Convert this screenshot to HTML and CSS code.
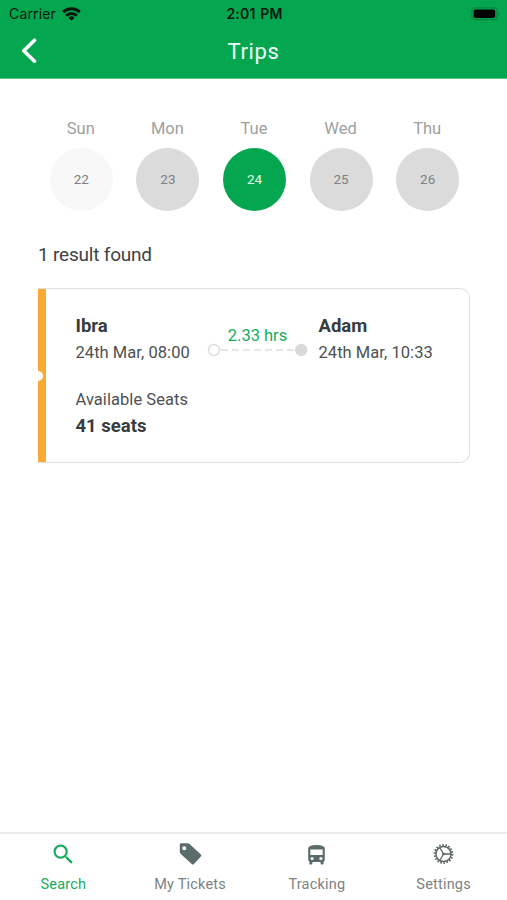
FILE: index.html
```
<!DOCTYPE html>
<html lang="en">
<head>
<meta charset="utf-8">
<title>Trips</title>
<link rel="stylesheet" href="styles.css">
</head>
<body>
<div class="app">
  <header class="header">
    <div class="status">
      <div class="status-left"><span class="carrier">Carrier</span>
        <svg class="wifi" width="19" height="14" viewBox="0 0 19 14" fill="none" stroke="#06170c" stroke-width="2.900"><path d="M1.200 5.100a12 12 0 0 1 16.600 0M4.100 8.700a7.800 7.800 0 0 1 10.800 0"/><path d="M9.500 13.700 6.400 10.800a4.500 4.500 0 0 1 6.200 0z" fill="#06170c" stroke="none"/></svg>
      </div>
      <span class="clock">2:01 PM</span>
      <svg class="battery" width="30" height="14" viewBox="0 0 30 14"><rect x=".8" y=".8" width="25.200" height="11.800" rx="3.200" fill="none" stroke="#07833f" stroke-width="1.200"/><rect x="2.600" y="2.400" width="21.600" height="8.600" rx="1.800" fill="#000"/><path d="M27.300 4.700q3 2 0 4z" fill="#07833f"/></svg>
    </div>
    <div class="nav">
      <svg class="back" width="16" height="26" viewBox="0 0 16 26" fill="none" stroke="#fff" stroke-width="3.600" stroke-linecap="round" stroke-linejoin="round"><path d="M13.500 2.200 2.800 12.700l10.700 10.500"/></svg>
      <h1 class="title">Trips</h1>
      <span></span>
    </div>
  </header>
  <main class="main">
    <div class="days">
      <div class="day"><span class="name">Sun</span><span class="date past">22</span></div>
      <div class="day"><span class="name">Mon</span><span class="date">23</span></div>
      <div class="day"><span class="name">Tue</span><span class="date active">24</span></div>
      <div class="day"><span class="name">Wed</span><span class="date">25</span></div>
      <div class="day"><span class="name">Thu</span><span class="date">26</span></div>
    </div>
    <p class="count">1 result found</p>
    <article class="card">
      <div class="stripe"><span class="notch"></span></div>
      <div class="details">
        <div class="route">
          <div class="stop"><strong class="strong">Ibra</strong><span class="text">24th Mar, 08:00</span></div>
          <div class="leg">
            <span class="duration">2.33 hrs</span>
            <svg width="101" height="14" viewBox="0 0 101 14"><path d="M14 7h74" stroke="#dedede" stroke-width="1.500" stroke-dasharray="7 4"/><circle cx="7" cy="7" r="5.500" fill="#fff" stroke="#dedede" stroke-width="1.500"/><circle cx="94.200" cy="7" r="6.200" fill="#dadada"/></svg>
          </div>
          <div class="stop"><strong class="strong">Adam</strong><span class="text">24th Mar, 10:33</span></div>
        </div>
        <div class="seats"><span class="text">Available Seats</span><strong class="strong">41 seats</strong></div>
      </div>
    </article>
  </main>
  <nav class="tabs">
    <a class="tab selected"><svg width="25" height="25" viewBox="0.700 0.700 22.800 22.800" fill="currentColor"><path d="M15.500 14h-.79l-.28-.27A6.470 6.470 0 0 0 16 9.500 6.500 6.500 0 1 0 9.500 16c1.610 0 3.090-.59 4.230-1.570l.27.28v.79l5 4.990L20.490 19l-4.990-5zm-6 0C7.010 14 5 11.990 5 9.500S7.010 5 9.500 5 14 7.010 14 9.500 11.990 14 9.500 14z"/></svg><span class="label">Search</span></a>
    <a class="tab"><svg width="25" height="25" viewBox="0 0 25 25"><path fill="#5c6c6b" fill-rule="evenodd" d="M3 1.300H9.800q1 0 1.800.8l11.300 10.300q1.100 1.100 0 2.200l-6.900 7.300q-1.100 1-2.200 0L2.800 12.100q-1-.9-1-2V2.500q0-1.200 1.200-1.200zM6.300 4.300a2 2 0 1 0 0 4 2 2 0 0 0 0-4z"/></svg><span class="label">My Tickets</span></a>
    <a class="tab"><svg width="25" height="25" viewBox="0 0 25 25"><path fill="#5c6c6b" fill-rule="evenodd" d="M4.200 6.500q0-3.600 8.300-3.600t8.300 3.600v11q0 1.200-1.200 2.200v1.800q0 1-1 1h-1q-1 0-1-1v-1.400H8.400v1.400q0 1-1 1h-1q-1 0-1-1v-1.800q-1.200-1-1.200-2.200zM6.300 7.600v5.300h12.400V7.600zM8.100 14.900a1.600 1.600 0 1 0 0 3.200 1.600 1.600 0 0 0 0-3.200zm8.800 0a1.600 1.600 0 1 0 0 3.200 1.600 1.600 0 0 0 0-3.200z"/></svg><span class="label">Tracking</span></a>
    <a class="tab"><svg width="25" height="25" viewBox="0 0.500 25 25" fill="none" stroke="#5c6766"><circle cx="12.500" cy="12.500" r="7.600" stroke-width="1.500"/><circle cx="12.500" cy="12.500" r="9" stroke-width="1.800" stroke-dasharray="1.600 1.542"/><path d="M12.500 12.500H20M12.500 12.500 8.800 6M12.500 12.500 8.800 19" stroke-width="1.300"/><circle cx="12.500" cy="12.500" r="1.300" fill="#5c6766" stroke="none"/></svg><span class="label">Settings</span></a>
  </nav>
</div>
</body>
</html>
```
FILE: styles.css
```
* { box-sizing: border-box; }
body { margin: 0; background: #fff; font-family: Roboto, sans-serif; color: #3d4245; }
svg { display: block; flex: none; }
.app { display: flex; flex-direction: column; width: 507px; height: 900px; }
.header { height: 79px; background: #04a750; border-bottom: 1px solid #5cc58d; }
.status { display: grid; grid-template-columns: 1fr auto 1fr; align-items: center; height: 27px; padding: 0 6px 0 9px; font-family: Inter, sans-serif; color: #06170c; }
.status-left { display: flex; align-items: center; gap: 6px; }
.carrier { font-size: 14px; letter-spacing: .15px; }
.clock { margin-right: 1px; font-size: 14px; font-weight: 600; letter-spacing: .2px; word-spacing: 1px; }
.battery { justify-self: end; }
.nav { display: grid; grid-template-columns: 1fr auto 1fr; align-items: center; height: 48px; padding: 0 21px; }
.title { margin: 2px 0 0; color: #f2fff7; font-size: 22px; font-weight: 400; letter-spacing: .6px; line-height: 26px; }
.main { flex: 1; padding: 39px 37px 0; }
.days { display: grid; grid-template-columns: repeat(5, 1fr); margin: 0 -1px 0 1px; }
.day { display: flex; flex-direction: column; align-items: center; gap: 9px; }
.name { font-size: 16.500px; line-height: 20px; padding-top: 1px; margin-right: 1px; color: #a0a0a0; }
.date { display: grid; place-items: center; width: 63px; height: 63px; margin-top: -.5px; border-radius: 50%; background: #dbdbdb; color: #7d8182; font-size: 13.500px; }
.past { background: #f8f8f8; }
.active { background: #04a750; color: #e9fff1; }
.count { margin: 32.500px 0 21px 1px; font-size: 19px; line-height: 24px; letter-spacing: -.2px; }
.card { display: flex; height: 175px; border: 1.500px solid #e0e0e0; border-left: 0; border-radius: 0 10px 10px 0; margin-left: 1px; }
.stripe { display: flex; align-items: center; width: 8px; overflow: hidden; background: #f9aa32; }
.notch { flex: none; width: 10px; height: 10px; margin-left: -5px; border-radius: 50%; background: #fff; }
.details { padding: 24px 0 0 29.500px; }
.route { display: flex; }
.stop, .seats { display: flex; flex-direction: column; gap: 1px; }
.stop { width: 132px; }
.strong { font-size: 18.500px; font-weight: 700; line-height: 26px; color: #373c3f; }
.text { font-size: 16.500px; line-height: 26px; letter-spacing: .05px; color: #4d5153; white-space: nowrap; }
.leg { display: flex; flex-direction: column; align-items: center; width: 111px; padding: 13px 11px 0 0; }
.duration { font-size: 16.500px; line-height: 20px; color: #16ad5d; margin-bottom: -3px; }
.seats { margin-top: 21px; }
.seats .strong { margin-top: -1px; }
.tabs { display: grid; grid-template-columns: repeat(4, 1fr); height: 68px; border-top: 2px solid #ececec; }
.tab { display: flex; flex-direction: column; align-items: center; gap: 8px; padding-top: 8px; color: #7c8383; }
.selected { color: #18aa5b; }
.label { font-size: 14.500px; line-height: 20px; letter-spacing: .2px; }
```
